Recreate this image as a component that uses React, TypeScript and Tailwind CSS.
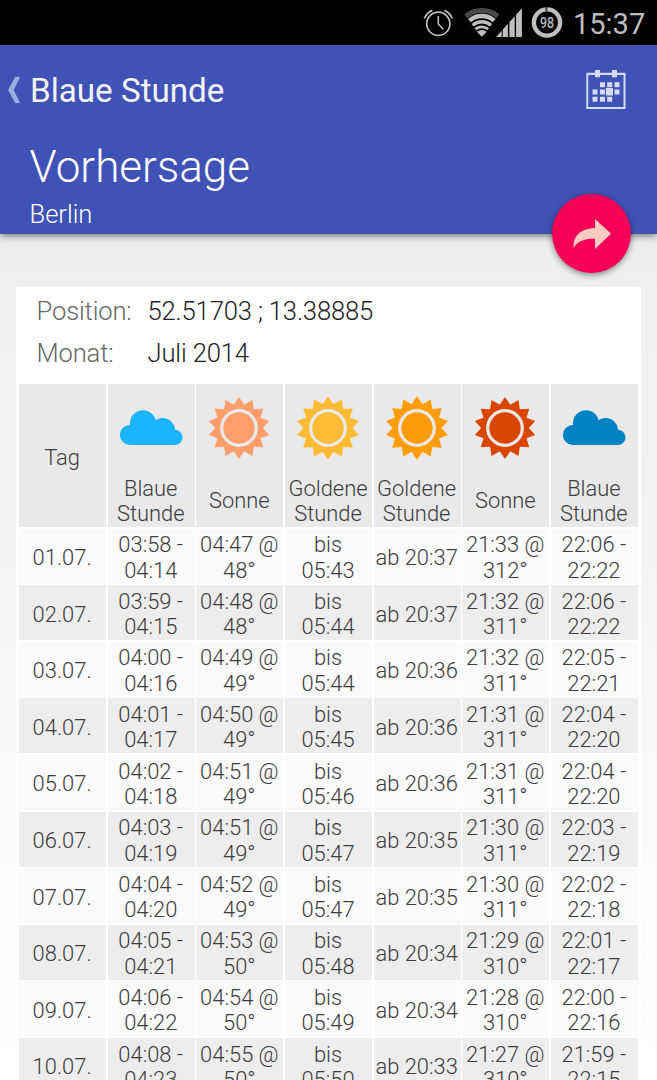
type Row = { day: string; cells: string[][] };

const rows: Row[] = [
  { day: "01.07.", cells: [["03:58 -", "04:14"], ["04:47 @", "48°"], ["bis", "05:43"], ["ab 20:37"], ["21:33 @", "312°"], ["22:06 -", "22:22"]] },
  { day: "02.07.", cells: [["03:59 -", "04:15"], ["04:48 @", "48°"], ["bis", "05:44"], ["ab 20:37"], ["21:32 @", "311°"], ["22:06 -", "22:22"]] },
  { day: "03.07.", cells: [["04:00 -", "04:16"], ["04:49 @", "49°"], ["bis", "05:44"], ["ab 20:36"], ["21:32 @", "311°"], ["22:05 -", "22:21"]] },
  { day: "04.07.", cells: [["04:01 -", "04:17"], ["04:50 @", "49°"], ["bis", "05:45"], ["ab 20:36"], ["21:31 @", "311°"], ["22:04 -", "22:20"]] },
  { day: "05.07.", cells: [["04:02 -", "04:18"], ["04:51 @", "49°"], ["bis", "05:46"], ["ab 20:36"], ["21:31 @", "311°"], ["22:04 -", "22:20"]] },
  { day: "06.07.", cells: [["04:03 -", "04:19"], ["04:51 @", "49°"], ["bis", "05:47"], ["ab 20:35"], ["21:30 @", "311°"], ["22:03 -", "22:19"]] },
  { day: "07.07.", cells: [["04:04 -", "04:20"], ["04:52 @", "49°"], ["bis", "05:47"], ["ab 20:35"], ["21:30 @", "311°"], ["22:02 -", "22:18"]] },
  { day: "08.07.", cells: [["04:05 -", "04:21"], ["04:53 @", "50°"], ["bis", "05:48"], ["ab 20:34"], ["21:29 @", "310°"], ["22:01 -", "22:17"]] },
  { day: "09.07.", cells: [["04:06 -", "04:22"], ["04:54 @", "50°"], ["bis", "05:49"], ["ab 20:34"], ["21:28 @", "310°"], ["22:00 -", "22:16"]] },
  { day: "10.07.", cells: [["04:08 -", "04:23"], ["04:55 @", "50°"], ["bis", "05:50"], ["ab 20:33"], ["21:27 @", "310°"], ["21:59 -", "22:15"]] },
];

const columns: { icon: "cloud" | "sun"; color: string; size?: number; label: string[] }[] = [
  { icon: "cloud", color: "#1cb4ff", label: ["Blaue", "Stunde"] },
  { icon: "sun", color: "#ff9e6b", size: 31, label: ["Sonne"] },
  { icon: "sun", color: "#ffbb33", size: 31.7, label: ["Goldene", "Stunde"] },
  { icon: "sun", color: "#ff9c0a", size: 31.7, label: ["Goldene", "Stunde"] },
  { icon: "sun", color: "#d94600", size: 31, label: ["Sonne"] },
  { icon: "cloud", color: "#0083c4", label: ["Blaue", "Stunde"] },
];

function sunPoints(outer: number) {
  return Array.from({ length: 28 }, (_, i) => {
    const r = i % 2 ? outer * 0.77 : outer;
    const a = (i * Math.PI) / 14;
    return `${(32 + r * Math.sin(a)).toFixed(2)},${(32 - r * Math.cos(a)).toFixed(2)}`;
  }).join(" ");
}

function Sun({ color, size }: { color: string; size: number }) {
  return (
    <svg width="64" height="64" viewBox="0 0 64 64" fill={color}>
      <polygon points={sunPoints(size)} />
      <circle cx="32" cy="32" r="17.3" stroke="#e9e9e9" strokeWidth="3.2" />
    </svg>
  );
}

function Cloud({ color }: { color: string }) {
  return (
    <svg width="64" height="64" viewBox="0 0 64 64" fill={color}>
      <circle cx="10.9" cy="38.9" r="10" />
      <circle cx="24" cy="27.3" r="13" />
      <circle cx="43.6" cy="34.5" r="12.5" />
      <circle cx="55.9" cy="41.3" r="7.6" />
      <path d="M10.9 30h13v-3h20l12 9v12.900h-45z" />
    </svg>
  );
}

function AlarmIcon() {
  return (
    <svg width="30" height="30" viewBox="0 0 30 30" fill="none" stroke="#bebebe" className="shrink-0">
      <circle cx="15.3" cy="15.8" r="11.6" strokeWidth="1.7" />
      <path d="M15.3 8v8l5 5.2" strokeWidth="1.6" />
      <path d="M1.3 10.5C2.8 7 5.5 4 9.2 2.4M29.3 10.5C27.8 7 25 4 21.4 2.4" strokeWidth="1.7" />
    </svg>
  );
}

function WifiIcon() {
  return (
    <svg width="36" height="30" viewBox="0 0 36 30" fill="none" className="shrink-0">
      <path d="M1.8 8.4A25 25 0 0 1 33.800 8.4" stroke="#4a4a4a" strokeWidth="5" />
      <g stroke="#bebebe">
        <path d="M5.4 12.6A19 19 0 0 1 30.2 12.6" strokeWidth="4.4" />
        <path d="M8.600 17.2A14 14 0 0 1 27 17.2" strokeWidth="3.5" />
        <path d="M11.4 21.2A10 10 0 0 1 24.2 21.2" strokeWidth="2.9" />
      </g>
      <path d="M12.8 23.7q5-3.600 10 0l-5 5z" fill="#bebebe" />
    </svg>
  );
}

function SignalIcon() {
  return (
    <svg width="26" height="30" viewBox="0 0 26 30" fill="#bebebe" className="shrink-0">
      <path d="M0 29l5.7-6.3V29zM6.7 29v-7.5l5.2-5.700v13.200zM13.400 29V14.200l5.300-5.900V29zM20.1 29V6.700L25.9.3V29z" />
    </svg>
  );
}

function BatteryIcon() {
  return (
    <svg width="32" height="32" viewBox="0 0 32 32" className="shrink-0">
      <circle cx="16" cy="15.5" r="13.1" fill="none" stroke="#bebebe" strokeWidth="4.400" />
      <path d="M15.4 0V4.800" stroke="#333" strokeWidth="1.8" />
      <text x="16" y="21" textAnchor="middle" fontSize="15.3" fontWeight="500" textLength="14" lengthAdjust="spacingAndGlyphs" fill="#bebebe" fontFamily="Roboto">98</text>
    </svg>
  );
}

function CalendarIcon() {
  return (
    <svg width="40" height="40" viewBox="0 0 40 40" fill="#d5dbf2">
      <path fillRule="evenodd" d="M.3 2.7h39.2V39H.3zM2.2 5v32h35.3V5z" />
      <path d="M9 0h5v7.2H9zM26 0h5v7.2h-5z" />
      <path d="M14 12.2h5v5h-5zM21.2 12.2h5v5h-5zM28.5 12.2h5v5h-5zM6.5 19.5h5v5h-5zM14 19.5h5v5h-5zM20 18h7v7.5h-7zM28.5 19.5h5v5h-5zM6.5 26.8h5v5h-5zM14 26.8h5v5h-5zM21.2 26.8h5v5h-5z" />
    </svg>
  );
}

export default function App() {
  return (
    <div className="flex h-[1080px] w-[657px] flex-col overflow-hidden bg-linear-to-b from-[#e9e9e9] to-white font-[Roboto,sans-serif] text-[#3c3c3c]">
      <div className="flex h-[45px] shrink-0 items-center bg-black pl-[423px] text-[#bebebe]">
        <AlarmIcon />
        <div className="ml-[11px] flex"><WifiIcon /></div>
        <div className="-ml-[4px] flex"><SignalIcon /></div>
        <div className="ml-[9px] flex"><BatteryIcon /></div>
        <span className="ml-[10px] pt-[3px] text-[29px] leading-none">15:37</span>
      </div>

      <header className="relative h-[189px] shrink-0 bg-[#4052b5] text-white shadow-[0_2px_7px_rgba(0,0,0,0.5)]">
        <div className="flex h-[90px] items-center justify-between pr-[31px] pl-[8px]">
          <div className="flex items-center">
            <svg width="13" height="26" viewBox="0 0 13 26" fill="#9aaee0"><path d="M7.2 0h5L5.7 13l6.5 13h-5L0 13z" /></svg>
            <h1 className="ml-[9px] pt-[1px] text-[33.200px] leading-[40px] text-[#f3f3f3]">Blaue Stunde</h1>
          </div>
          <CalendarIcon />
        </div>
        <div className="pl-[29.5px] font-light">
          <h2 className="pt-[2px] text-[44px] leading-[60px]">Vorhersage</h2>
          <p className="mt-[1px] text-[25.500px] leading-[32px]">Berlin</p>
        </div>
        <button className="absolute top-[149px] left-[552px] flex size-[79px] items-center justify-center rounded-full bg-[#f50057] shadow-[0_2px_6px_rgba(0,0,0,0.45)]">
          <svg width="38" height="30" viewBox="0 0 38 30" fill="#fcccc2"><path d="M22 0l16 14.7L22 30V19.7C11 19.5 4.500 22 .5 29-.5 17 8 9.300 22 9z" /></svg>
        </button>
      </header>

      <main className="mt-[53px] ml-[16px] w-[625px] grow rounded-t-[2px] bg-white px-[3px]">
        <dl className="grid h-[97px] grid-cols-[111px_1fr] content-start pt-[3px] pl-[17.5px] text-[25.600px] leading-[42px] font-light tracking-[-0.15px]">
          <dt className="text-[#666]">Position:</dt>
          <dd className="text-[#222]">52.51703 ; 13.38885</dd>
          <dt className="text-[#666]">Monat:</dt>
          <dd className="text-[#222]">Juli 2014</dd>
        </dl>

        <div className="flex w-[619px] flex-col gap-[1.6px] text-center text-[21.900px] leading-[25.3px] font-light whitespace-nowrap">
          <div className="grid h-[143px] grid-cols-7 gap-x-[1.4px]">
            <div className="flex items-center justify-center bg-[#e9e9e9] pt-[4px] pr-px">Tag</div>
            {columns.map((c, i) => (
              <div key={i} className="flex flex-col items-center bg-[#e9e9e9] pt-[12px] pr-px">
                {c.icon === "sun" ? <Sun color={c.color} size={c.size ?? 31} /> : <Cloud color={c.color} />}
                <div className="mt-[15px] flex h-[52px] flex-col justify-center">
                  {c.label.map((l) => <span key={l}>{l}</span>)}
                </div>
              </div>
            ))}
          </div>
          {rows.map((r, i) => (
            <div key={r.day} className="grid h-[55px] grid-cols-7 gap-x-[1.4px]">
              {[[r.day], ...r.cells].map((cell, j) => (
                <div key={j} className={`flex flex-col justify-center pt-[3px] pr-px ${i % 2 ? "bg-[#ededed]" : "bg-[#fafafa]"}`}>
                  {cell.map((l) => <span key={l}>{l}</span>)}
                </div>
              ))}
            </div>
          ))}
        </div>
      </main>
    </div>
  );
}
